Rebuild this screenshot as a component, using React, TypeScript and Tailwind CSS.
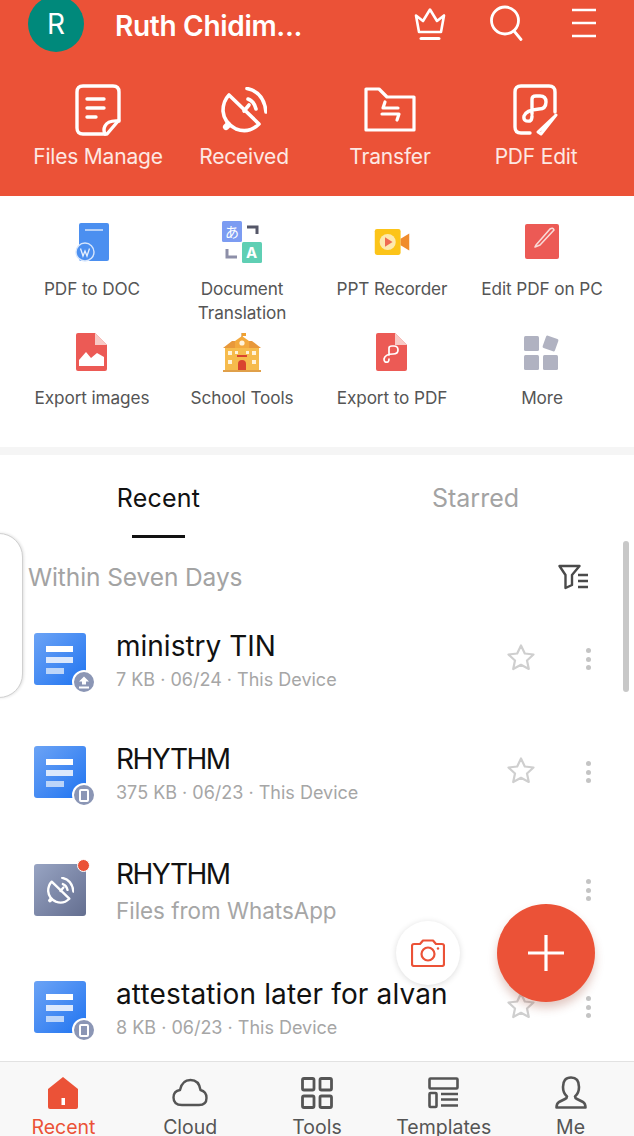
const font = { fontFamily: "Inter, 'Noto Sans CJK JP', sans-serif" };

function Svg({ w, h, vb, children, className = "" }: { w: number; h: number; vb?: string; children: React.ReactNode; className?: string }) {
  return (
    <svg width={w} height={h} viewBox={vb ?? `0 0 ${w} ${h}`} fill="none" className={className}>
      {children}
    </svg>
  );
}

const Crown = () => (
  <Svg w={34} h={34} vb="0 0 34 34">
    <g stroke="#fff" strokeWidth="2.6" strokeLinejoin="round" strokeLinecap="round">
      <path d="M3 8.5 L10 14 L17 2.5 L24 14 L31 8.5 L28 25 H6 Z" />
      <path d="M8 31.5 H26" strokeWidth="3" />
    </g>
  </Svg>
);
const Search = () => (
  <Svg w={36} h={36}>
    <g stroke="#fff" strokeWidth="2.8" strokeLinecap="round">
      <circle cx="16" cy="15.5" r="13.5" />
      <path d="M25 26 L32 34.5" />
    </g>
  </Svg>
);
const Menu = () => (
  <Svg w={26} h={30}>
    <g stroke="#fff" strokeWidth="2.6">
      <path d="M1 2 H25 M1 15 H25 M1 28 H25" />
    </g>
  </Svg>
);
const FilesIcon = () => (
  <Svg w={46} h={52}>
    <g stroke="#fff" strokeWidth="3.4" strokeLinecap="round" strokeLinejoin="round">
      <path d="M8 2 H38 Q44 2 44 8 V36 L32 50 H8 Q2 50 2 44 V8 Q2 2 8 2 Z" />
      <path d="M44 37 Q33 36 30 42 Q28 46 30 50" />
      <path d="M12 15 H29 M12 24 H29 M12 33 H21" />
    </g>
  </Svg>
);
const DishIcon = ({ size = 46, color = "#fff", sw = 3.6 }: { size?: number; color?: string; sw?: number }) => (
  <svg width={size} height={size} viewBox="0 0 46 46" fill="none">
    <g stroke={color} strokeWidth={sw} strokeLinecap="round" strokeLinejoin="round">
      <path d="M8 8 L38 37 Q28 47 15 42 Q3 36 2 24 Q2 14 8 8 Z" />
      <path d="M5 40 L7 38" strokeWidth={sw + 2.5} />
      <path d="M26 1.5 Q43 5 45 25" />
      <path d="M27 12 Q33 14 35 22" />
      <path d="M23 24 L28 18" />
    </g>
  </svg>
);
const TransferIcon = () => (
  <Svg w={52} h={46}>
    <g stroke="#fff" strokeWidth="3.2" strokeLinejoin="round" strokeLinecap="round">
      <path d="M2 2 H15 L23 10 H50 V43 H2 Z" />
      <path d="M18 27 H35 L33 33 M34 21 H19 L21 15" />
    </g>
  </Svg>
);
const PdfEditIcon = () => (
  <Svg w={46} h={52}>
    <g stroke="#fff" strokeWidth="3.4" strokeLinecap="round" strokeLinejoin="round">
      <path d="M42 28 V8 Q42 2 36 2 H8 Q2 2 2 8 V43 Q2 49 8 49 H17" />
      <path d="M19 30 V15 Q19 12 23 12 H27 Q33 12 33 18 Q33 25 26 25 Q13 26 11 32 Q10 38 17 37 Q19 36 19 32" />
      <path d="M25 48 L42 32 L43 31 L28 50 Z" strokeWidth="3" />
    </g>
  </Svg>
);
const PdfToDoc = () => (
  <Svg w={34} h={40}>
    <rect x="4" y="1" width="30" height="38" rx="2" fill="#4b8ff0" />
    <path d="M10 8 H28" stroke="#cfe0fb" strokeWidth="1.6" />
    <circle cx="10" cy="30" r="9" fill="#4b8ff0" stroke="#d7e6fc" strokeWidth="1.4" />
    <path d="M5.5 26.5 L8 34 L10 29 L12 34 L14.5 26.5" stroke="#e6f0fe" strokeWidth="1.3" />
  </Svg>
);
const Translate = () => (
  <div className="relative h-[42px] w-[40px]">
    <Svg w={40} h={42}>
      <rect x="0" y="0" width="20" height="21" rx="1.5" fill="#7c9cf2" />
      <rect x="20" y="21" width="20" height="21" rx="1.5" fill="#5fcfb4" />
      <path d="M25 6 H35 V13" stroke="#555768" strokeWidth="3" />
      <path d="M5 28 V36 H15" stroke="#8d8fa8" strokeWidth="3" />
    </Svg>
    <span className="absolute left-[3px] top-[1px] text-[14px] leading-[19px] text-white">あ</span>
    <span className="absolute left-[24px] top-[23px] text-[15px] font-bold leading-[18px] text-white">A</span>
  </div>
);
const Recorder = () => (
  <Svg w={40} h={28} vb="0 0 32 26">
    <rect x="0" y="1" width="24" height="24" rx="2" fill="#fcc419" />
    <path d="M24 10 L32 5 V21 L24 16 Z" fill="#f08c2d" />
    <circle cx="12" cy="13" r="7.5" fill="#fde9ae" />
    <path d="M9.5 8.5 L16.5 13 L9.5 17.5 Z" fill="#ef6b52" />
  </Svg>
);
const EditPc = () => (
  <Svg w={34} h={36}>
    <rect x="0" y="0" width="34" height="35" rx="2" fill="#ec5a55" />
    <path d="M11 21 L25 5 Q28 3 29 6 L15 21 L10 23 Z" stroke="#f9d9d6" strokeWidth="1.6" strokeLinejoin="round" />
  </Svg>
);
const ExportImages = () => (
  <Svg w={32} h={38}>
    <path d="M2 0 H19 L31 12 V36 Q31 38 29 38 H2 Q0 38 0 36 V2 Q0 0 2 0 Z" fill="#ec5a55" />
    <path d="M19 0 L31 12 H19 Z" fill="#f8c9c5" />
    <path d="M3 33 V27 L10 19 L15 25 L21 20 L28 24 V33 Z" fill="#fff" />
  </Svg>
);
const School = () => (
  <Svg w={38} h={40}>
    <path d="M19 8 V1" stroke="#b7791f" strokeWidth="1" />
    <path d="M19 1 H23 V4 H19 Z" fill="#f0a030" />
    <rect x="2" y="16" width="34" height="23" fill="#f6bb4c" />
    <path d="M0 16 L9 9 H29 L38 16 Z" fill="#e8983a" />
    <path d="M12 16 V9 L19 4 L26 9 V16 Z" fill="#f3a93d" />
    <circle cx="19" cy="11" r="2.6" fill="#fff3da" />
    <rect x="5" y="19" width="4" height="4" fill="#fff3da" />
    <rect x="29" y="19" width="4" height="4" fill="#fff3da" />
    <rect x="5" y="28" width="4" height="4" fill="#fff3da" />
    <rect x="29" y="28" width="4" height="4" fill="#fff3da" />
    <rect x="12" y="19" width="3" height="3" fill="#fff3da" />
    <rect x="23" y="19" width="3" height="3" fill="#fff3da" />
    <rect x="14" y="23" width="10" height="2" fill="#d9432f" />
    <path d="M15 39 V32 Q15 28 19 28 Q23 28 23 32 V39 Z" fill="#d9432f" />
    <rect x="0" y="38" width="38" height="2" fill="#e0a04a" />
  </Svg>
);
const ExportPdf = () => (
  <Svg w={32} h={38}>
    <path d="M2 0 H19 L31 12 V36 Q31 38 29 38 H2 Q0 38 0 36 V2 Q0 0 2 0 Z" fill="#ec5a55" />
    <path d="M19 0 L31 12 H19 Z" fill="#f8c9c5" />
    <path d="M13 22 V15 Q13 13 16 13 H18 Q22 13 22 17 Q22 21 17 21 Q9 21 8 26 Q8 30 12 29 Q13 28 13 26" stroke="#fff" strokeWidth="1.7" strokeLinecap="round" />
  </Svg>
);
const More = () => (
  <Svg w={36} h={36}>
    <rect x="0" y="2" width="15" height="15" rx="1.5" fill="#b0b2c1" />
    <rect x="0" y="21" width="15" height="15" rx="1.5" fill="#b0b2c1" />
    <rect x="19" y="21" width="15" height="15" rx="1.5" fill="#b0b2c1" />
    <rect x="20" y="3" width="13" height="13" rx="1.5" fill="#b0b2c1" transform="rotate(20 26.5 9.5)" />
  </Svg>
);
const FilterIcon = () => (
  <Svg w={32} h={26}>
    <g stroke="#4a4a4a" strokeWidth="2.4" strokeLinejoin="round">
      <path d="M1.5 2 H21.5 L14 11 V21 L7.5 24 V11 Z" />
      <path d="M20 11 H30 M20 17 H30 M20 23 H30" />
    </g>
  </Svg>
);

function Badge({ kind }: { kind: "up" | "device" }) {
  return (
    <div className="absolute bottom-[-9px] right-[-10px] flex h-[24px] w-[24px] items-center justify-center rounded-full border-2 border-white bg-[#8b96b5]">
      {kind === "up" ? (
        <Svg w={12} h={13}>
          <path d="M6 0.5 L11 5.5 H8 V8.5 H4 V5.5 H1 Z" fill="#fff" />
          <rect x="1" y="10.5" width="10" height="2" fill="#fff" />
        </Svg>
      ) : (
        <div className="h-[13px] w-[10px] rounded-[2px] border-2 border-white" />
      )}
    </div>
  );
}

function DocIcon({ badge }: { badge: "up" | "device" }) {
  return (
    <div className="relative h-[52px] w-[52px] rounded-[3px] bg-gradient-to-br from-[#6ba3f5] to-[#1a73f0]">
      <div className="ml-[12px] flex flex-col gap-[5px] pt-[13px]">
        <div className="h-[6px] w-[27px] bg-white" />
        <div className="h-[6px] w-[27px] bg-[#dbe8fc]" />
        <div className="h-[6px] w-[18px] bg-[#bcd5f9]" />
      </div>
      <Badge kind={badge} />
    </div>
  );
}

function ReceivedIcon() {
  return (
    <div className="relative flex h-[52px] w-[52px] items-center justify-center rounded-[3px] bg-gradient-to-br from-[#98a4c3] to-[#646f90]">
      <DishIcon size={27} sw={4} />
      <div className="absolute right-[-4px] top-[-5px] h-[13px] w-[13px] rounded-full border-[1.5px] border-white bg-[#eb5237]" />
    </div>
  );
}

const StarIcon = () => (
  <Svg w={30} h={28}>
    <path d="M15 2.5 L18.8 10.5 L27.5 11.5 L21 17.5 L22.8 26 L15 21.8 L7.2 26 L9 17.5 L2.5 11.5 L11.2 10.5 Z" stroke="#cfcfcf" strokeWidth="2.2" strokeLinejoin="round" />
  </Svg>
);

function Dots() {
  return (
    <div className="flex w-[6px] flex-col gap-[3.5px]">
      <div className="h-[5px] w-[5px] rounded-full bg-[#c4c4c4]" />
      <div className="h-[5px] w-[5px] rounded-full bg-[#c4c4c4]" />
      <div className="h-[5px] w-[5px] rounded-full bg-[#c4c4c4]" />
    </div>
  );
}

function FileRow({
  icon,
  title,
  sub,
  h,
  pad,
  titleClass = "mt-[3px]",
  subClass = "mt-[3px] text-[18px] leading-[26px]",
  star = true,
}: {
  icon: React.ReactNode;
  title: string;
  sub: string;
  h: string;
  pad: string;
  titleClass?: string;
  subClass?: string;
  star?: boolean;
}) {
  return (
    <div className={`flex items-start pl-[34px] ${h} ${pad}`}>
      <div className="mt-[8px] shrink-0">{icon}</div>
      <div className="ml-[30px] min-w-0 flex-1">
        <div className={`whitespace-nowrap text-[28px] leading-[36px] text-[#111] ${titleClass}`}>{title}</div>
        <div className={`whitespace-nowrap text-[#a6a6a6] ${subClass}`}>{sub}</div>
      </div>
      <div className="mt-[17px] flex h-[30px] w-[30px] shrink-0 items-center justify-center">{star && <StarIcon />}</div>
      <div className="ml-[50px] mr-[42px] mt-[23px] shrink-0">
        <Dots />
      </div>
    </div>
  );
}

const NavIcons = {
  home: (
    <Svg w={32} h={34}>
      <path d="M16 1 L31 13 V31 Q31 33 29 33 H3 Q1 33 1 31 V13 Z" fill="#eb5237" />
      <rect x="14.5" y="22" width="3.5" height="7" fill="#fff" />
    </Svg>
  ),
  cloud: (
    <Svg w={36} h={30}>
      <path d="M10 27 Q1.5 27 1.5 19.5 Q1.5 13 8 12 Q10 2 18.5 2 Q27 2 28.5 12 Q34.5 13.5 34.5 20 Q34.5 27 27 27 Z" stroke="#555" strokeWidth="2.4" strokeLinejoin="round" />
    </Svg>
  ),
  tools: (
    <Svg w={32} h={32}>
      <g stroke="#555" strokeWidth="2.8">
        <rect x="1.5" y="1.5" width="11.5" height="11.5" rx="1.5" />
        <rect x="19" y="1.5" width="11.5" height="11.5" rx="1.5" />
        <rect x="1.5" y="19" width="11.5" height="11.5" rx="1.5" />
        <rect x="19" y="19" width="11.5" height="11.5" rx="1.5" />
      </g>
    </Svg>
  ),
  templates: (
    <Svg w={32} h={32}>
      <g stroke="#555" strokeWidth="2.6">
        <rect x="1.5" y="1.5" width="28" height="10" rx="1" />
        <rect x="1.5" y="16" width="7" height="14" rx="1" />
        <path d="M13 17 H30 M13 22.5 H30 M13 28.5 H30" />
      </g>
    </Svg>
  ),
  me: (
    <Svg w={32} h={34}>
      <path d="M16 1.5 Q24 1.5 24 11 Q24 17 20 20.5 Q20 22 22 23 L28 26 Q30.5 27.5 30.5 31.5 H1.5 Q1.5 27.5 4 26 L10 23 Q12 22 12 20.5 Q8 17 8 11 Q8 1.5 16 1.5 Z" stroke="#555" strokeWidth="2.6" strokeLinejoin="round" />
    </Svg>
  ),
};

export default function App() {
  const header = [
    { icon: <FilesIcon />, label: "Files Manage" },
    { icon: <DishIcon />, label: "Received" },
    { icon: <TransferIcon />, label: "Transfer" },
    { icon: <PdfEditIcon />, label: "PDF Edit" },
  ];
  const tools1 = [
    { icon: <PdfToDoc />, label: "PDF to DOC" },
    { icon: <Translate />, label: "Document Translation" },
    { icon: <Recorder />, label: "PPT Recorder" },
    { icon: <EditPc />, label: "Edit PDF on PC" },
  ];
  const tools2 = [
    { icon: <ExportImages />, label: "Export images" },
    { icon: <School />, label: "School Tools" },
    { icon: <ExportPdf />, label: "Export to PDF" },
    { icon: <More />, label: "More" },
  ];
  const nav = [
    { icon: NavIcons.home, label: "Recent", active: true },
    { icon: NavIcons.cloud, label: "Cloud" },
    { icon: NavIcons.tools, label: "Tools" },
    { icon: NavIcons.templates, label: "Templates" },
    { icon: NavIcons.me, label: "Me" },
  ];
  return (
    <div className="relative flex h-[1136px] w-[634px] flex-col overflow-hidden bg-white" style={font}>
      <header className="h-[196px] shrink-0 bg-[#eb5237] text-white">
        <div className="flex h-[52px] items-center">
          <div className="ml-[28px] -mt-[4px] flex h-[56px] w-[56px] shrink-0 items-center justify-center rounded-[50%] bg-[#00897b] text-[28px] leading-none">R</div>
          <div className="ml-[31px] w-[298px] text-[28px] font-semibold leading-[36px] tracking-[-0.3px]">Ruth Chidim...</div>
          <div className="mt-[-4px]"><Crown /></div>
          <div className="ml-[42px] mt-[-6px]"><Search /></div>
          <div className="ml-[46px] mt-[-6px]"><Menu /></div>
        </div>
        <div className="mt-[32px] grid grid-cols-4 px-[25px]">
          {header.map((it) => (
            <div key={it.label} className="flex flex-col items-center">
              <div className="flex h-[52px] items-center">{it.icon}</div>
              <div className="mt-[7px] whitespace-nowrap text-[21px] leading-[28px] tracking-[-0.2px] text-[#fde8e3]">{it.label}</div>
            </div>
          ))}
        </div>
      </header>

      <section className="h-[251px] shrink-0 px-[17px] pt-[25px]">
        <div className="grid h-[111px] grid-cols-4">
          {tools1.map((it) => (
            <div key={it.label} className="flex flex-col items-center">
              <div className="flex h-[42px] items-center">{it.icon}</div>
              <div className="mt-[14px] w-[140px] text-center text-[17.2px] leading-[24px] tracking-[-0.1px] text-[#555]">{it.label}</div>
            </div>
          ))}
        </div>
        <div className="grid grid-cols-4">
          {tools2.map((it) => (
            <div key={it.label} className="flex flex-col items-center">
              <div className="flex h-[40px] items-center">{it.icon}</div>
              <div className="mt-[14px] whitespace-nowrap text-center text-[17.2px] leading-[24px] tracking-[-0.1px] text-[#555]">{it.label}</div>
            </div>
          ))}
        </div>
      </section>
      <div className="h-[8px] shrink-0 bg-[#f5f5f5]" />

      <div className="grid h-[83px] shrink-0 grid-cols-2 text-[25px]">
        <div className="relative pt-[27px] text-center leading-[32px] tracking-[0.2px] text-[#111]">
          Recent
          <div className="absolute bottom-0 left-[132px] h-[3px] w-[53px] bg-[#111]" />
        </div>
        <div className="pt-[27px] text-center leading-[32px] text-[#a3a3a3]">Starred</div>
      </div>
      <div className="flex h-[80px] shrink-0 items-start justify-between pl-[28px] pr-[44px] pt-[23px]">
        <div className="text-[24.5px] leading-[32px] tracking-[-0.1px] text-[#a3a3a3]">Within Seven Days</div>
        <div className="mt-[3px]"><FilterIcon /></div>
      </div>

      <div className="min-h-0 flex-1 overflow-hidden">
        <FileRow icon={<DocIcon badge="up" />} title="ministry TIN" sub="7 KB · 06/24 · This Device" h="h-[113px]" pad="pt-[7px]" />
        <FileRow icon={<DocIcon badge="device" />} title="RHYTHM" sub="375 KB · 06/23 · This Device" h="h-[117px]" pad="pt-[7px]" titleClass="mt-[3px] tracking-[-1.5px]" />
        <FileRow
          icon={<ReceivedIcon />}
          title="RHYTHM"
          sub="Files from WhatsApp"
          h="h-[117px]"
          pad="pt-[8px]"
          star={false}
          titleClass="tracking-[-1.5px]"
          subClass="mt-[6px] text-[22.4px] leading-[26px]"
        />
        <FileRow icon={<DocIcon badge="device" />} title="attestation later for alvan" sub="8 KB · 06/23 · This Device" h="h-[80px]" pad="pt-[8px]" titleClass="mt-[3px] tracking-[0.15px]" />
      </div>

      <nav className="grid h-[75px] shrink-0 grid-cols-5 border-t border-[#e2e2e2] bg-[#f8f8f8]">
        {nav.map((it) => (
          <div key={it.label} className="flex flex-col items-center pt-[14px]">
            <div className="flex h-[34px] items-center">{it.icon}</div>
            <div className={`mt-[5px] whitespace-nowrap text-[19.5px] leading-[24px] ${it.active ? "text-[#eb5237]" : "text-[#555]"}`}>{it.label}</div>
          </div>
        ))}
      </nav>

      {/* side handle */}
      <div className="absolute left-[-20px] top-[533px] h-[165px] w-[43px] rounded-r-[24px] border border-[#d0d0d0] bg-white shadow-[1px_0_3px_rgba(0,0,0,0.12)]" />
      {/* scrollbar */}
      <div className="absolute left-[623px] top-[541px] h-[151px] w-[6px] rounded-full bg-[#c8c8c8]" />
      {/* camera button */}
      <div className="absolute left-[396px] top-[921px] flex h-[64px] w-[64px] items-center justify-center rounded-full bg-white shadow-[0_1px_6px_rgba(0,0,0,0.14)]">
        <Svg w={34} h={28}>
          <g stroke="#eb5237" strokeWidth="2.2" strokeLinejoin="round">
            <path d="M3 5 H9 L12 1.5 H22 L25 5 H31 Q33 5 33 7 V25 Q33 27 31 27 H3 Q1 27 1 25 V7 Q1 5 3 5 Z" />
            <circle cx="17" cy="15" r="6.5" />
          </g>
          <circle cx="27" cy="9.5" r="1.2" fill="#eb5237" />
        </Svg>
      </div>
      {/* add button */}
      <div className="absolute left-[497px] top-[904px] flex h-[98px] w-[98px] items-center justify-center rounded-full bg-[#eb5237] shadow-[0_6px_10px_rgba(150,60,40,0.28)]">
        <Svg w={38} h={38}>
          <path d="M19 1 V37 M1 19 H37" stroke="#fff" strokeWidth="3.2" />
        </Svg>
      </div>
    </div>
  );
}
